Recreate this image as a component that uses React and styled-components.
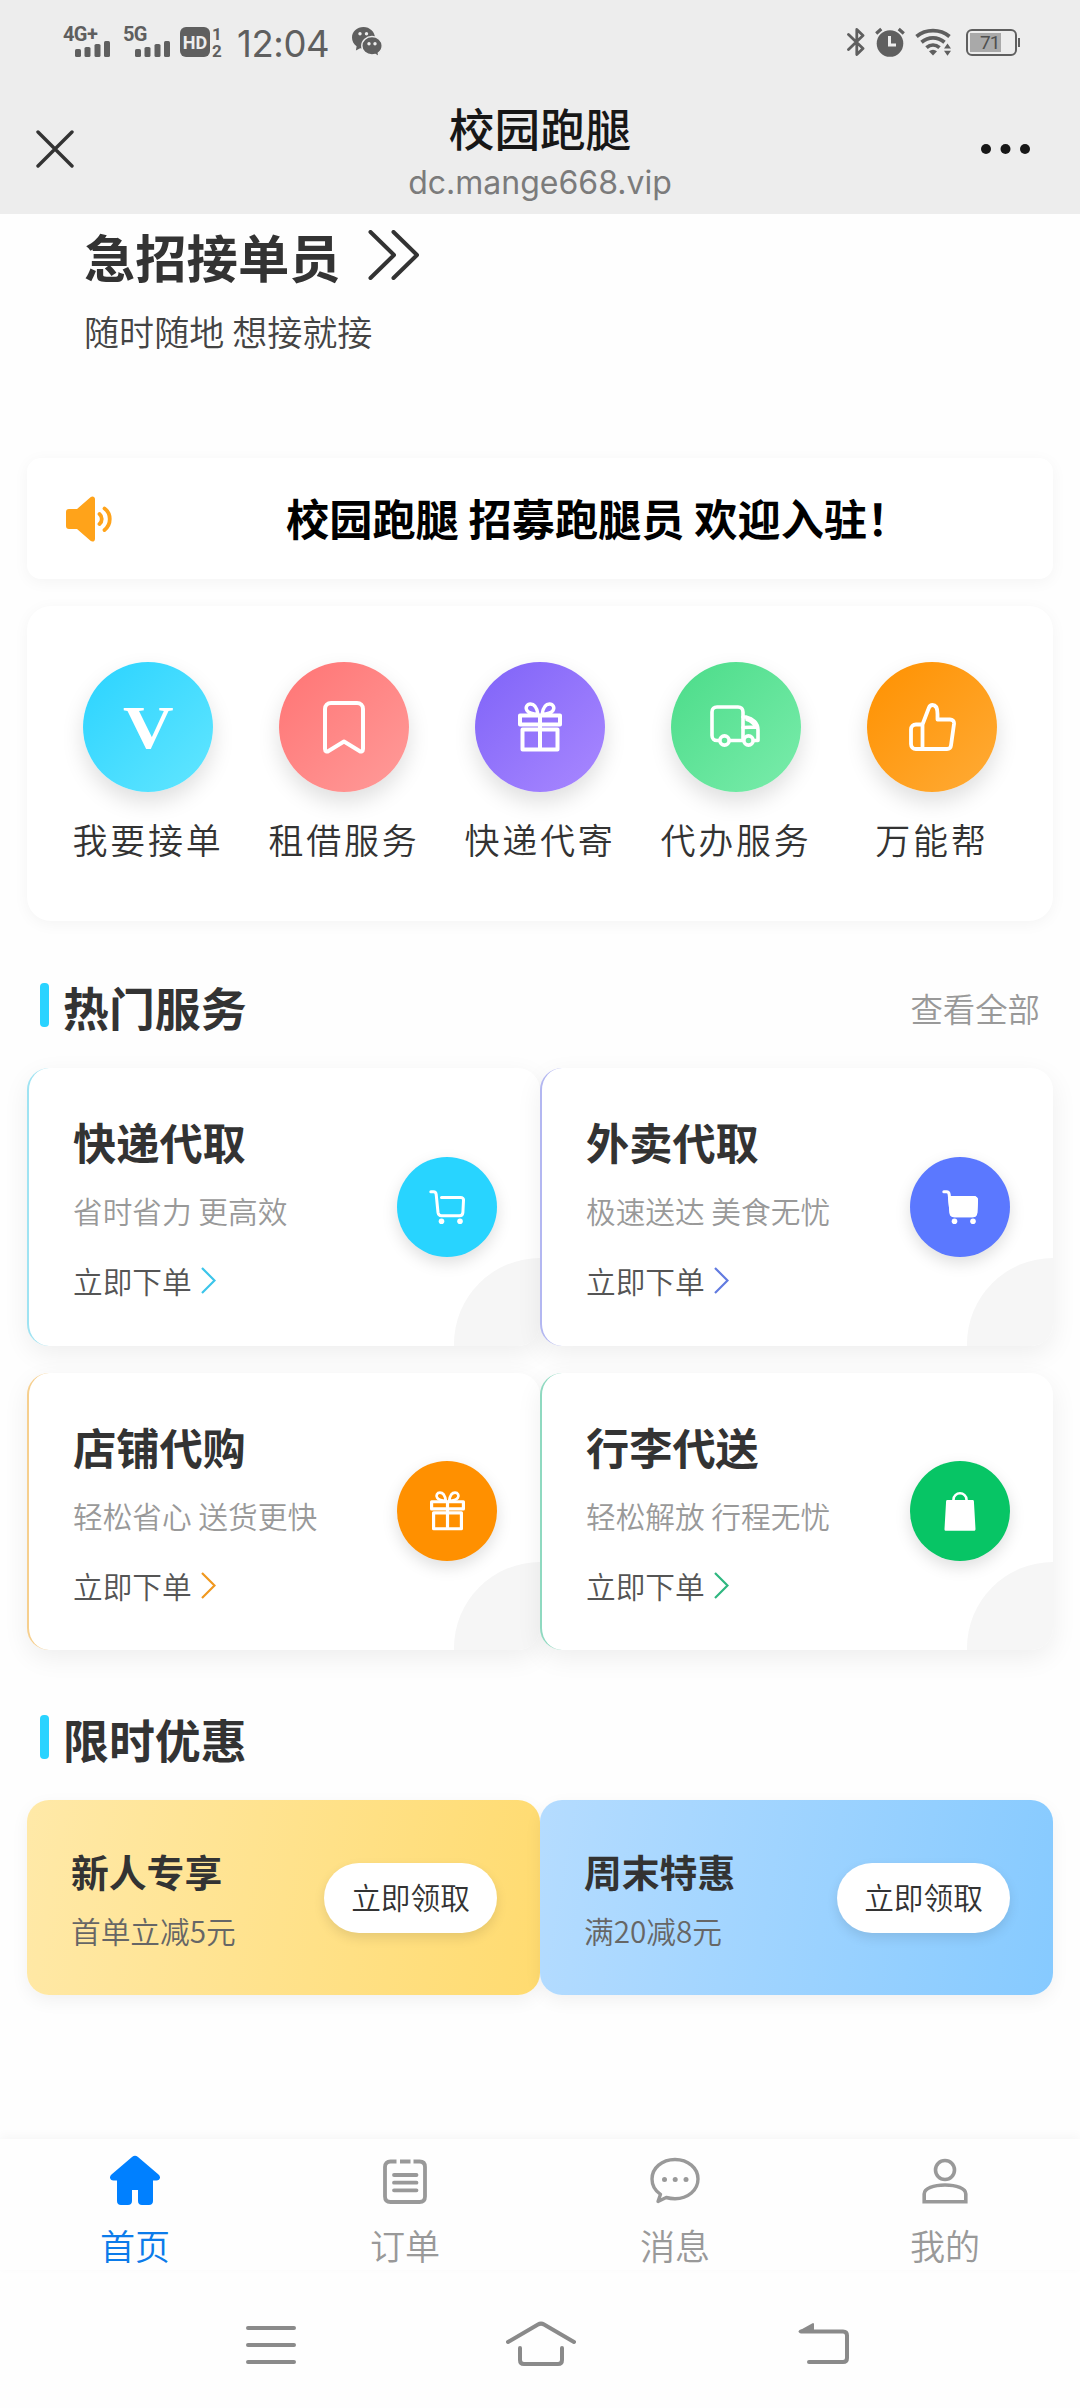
import React from "react";
import styled, { createGlobalStyle } from "styled-components";

const GlobalStyle = createGlobalStyle`
  * { box-sizing: border-box; }
  body {
    margin: 0;
    background: #fefefe;
    font-family: "Noto Sans CJK SC", "Noto Sans", sans-serif;
    color: #333;
  }
  svg { display: block; flex: none; }
`;

const Page = styled.div`
  width: 1080px;
  height: 2408px;
  display: flex;
  flex-direction: column;
  overflow: hidden;
  background: #fefefe;
`;

/* ---------- status bar and web view title ---------- */

const TopArea = styled.header`
  height: 214px;
  flex: none;
  background: #ededed;
`;

const StatusBar = styled.div`
  height: 84px;
  padding: 0 60px 0 63px;
  display: flex;
  justify-content: space-between;
  align-items: center;
  color: #5f5f5f;
`;

const StatusGroup = styled.div`
  display: flex;
  align-items: center;
  gap: ${(p) => p.$gap || 0}px;
`;

const Signal = styled.div`
  width: 47px;
  height: 30px;
  margin-right: ${(p) => p.$after}px;
  display: flex;
  flex-direction: column;
  align-items: flex-end;
`;

const SignalLabel = styled.span`
  align-self: flex-start;
  height: 14px;
  font: 700 20px/15px Roboto, sans-serif;
  letter-spacing: -0.6px;
`;

const Badge = styled.div`
  width: 30px;
  height: 30px;
  border-radius: 6px;
  background: #5f5f5f;
  color: #ededed;
  display: flex;
  justify-content: center;
  font: 700 18px/31px Roboto, sans-serif;
`;

const SimNumbers = styled.div`
  width: 12px;
  margin-left: 1px;
  height: 31px;
  display: flex;
  flex-direction: column;
  justify-content: space-between;
  align-items: center;
  font: 700 17px/14px Roboto, sans-serif;
`;

const Clock = styled.span`
  margin: 4px 20px 0 14px;
  width: 95px;
  font: 400 36.5px/44px Inter, Roboto, sans-serif;
  letter-spacing: -0.4px;
  white-space: nowrap;
`;

const BatteryBox = styled.div`
  display: flex;
  align-items: center;
  gap: 1px;
  margin-left: 4px;
`;

const Battery = styled.div`
  width: 51px;
  height: 27px;
  padding: 2px;
  border: 2px solid #5f5f5f;
  border-radius: 6px;
`;

const BatteryLevel = styled.div`
  width: 31px;
  height: 19px;
  padding-left: 10px;
  background: #a9a9a9;
  color: #4f4f4f;
  font: 400 19px/20px Roboto, sans-serif;
  letter-spacing: -1px;
`;

const BatteryTip = styled.div`
  width: 2px;
  height: 9px;
  background: #5f5f5f;
`;

const TitleBar = styled.div`
  height: 130px;
  padding: 0 50px 0 36px;
  display: grid;
  grid-template-columns: 200px 1fr 186px;
  align-items: center;
  justify-items: start;
`;

const TitleBlock = styled.div`
  justify-self: center;
  display: flex;
  flex-direction: column;
  align-items: center;
  gap: 8px;
  padding-top: 3px;
`;

const PageTitle = styled.h1`
  margin: 0;
  font-size: 45.6px;
  line-height: 56px;
  font-weight: 500;
  color: #171717;
`;

const PageHost = styled.div`
  font: 400 32px/40px Inter, Roboto, sans-serif;
  color: #7b7b7b;
`;

const MoreButton = styled.div`
  justify-self: end;
`;

/* ---------- content ---------- */

const Main = styled.main`
  flex: 1;
  padding: 0 27px;
`;

const Hero = styled.section`
  height: 244px;
  padding: 6.5px 0 0 57px;
`;

const HeroTitle = styled.h2`
  margin: 0;
  display: flex;
  align-items: center;
  gap: 27px;
  font-size: 51.3px;
  line-height: 70px;
  font-weight: 700;

  svg { margin-bottom: 2px; }
`;

const HeroText = styled.p`
  margin: 15.5px 0 0;
  font-size: 35.1px;
  line-height: 50px;
  font-weight: 350;
  color: #444;
`;

const Panel = styled.section`
  background: #fff;
  border-radius: ${(p) => p.$radius}px;
  box-shadow: 0 3px 16px rgba(0, 0, 0, 0.045);
`;

const Notice = styled(Panel)`
  height: 121px;
  padding: 0 39px;
  display: flex;
  align-items: center;
`;

const NoticeText = styled.span`
  padding: 0 0 4px 174px;
  font-size: 43.2px;
  line-height: 60px;
  font-weight: 700;
  color: #000;
  white-space: nowrap;
`;

const Menu = styled(Panel)`
  height: 315px;
  margin-top: 27px;
  padding: 56px 23px 0;
  display: grid;
  grid-template-columns: repeat(5, 1fr);
`;

const MenuItem = styled.div`
  display: flex;
  flex-direction: column;
  align-items: center;
`;

const MenuIcon = styled.div`
  width: 130px;
  height: 130px;
  border-radius: 50%;
  display: flex;
  align-items: center;
  justify-content: center;
  background: linear-gradient(135deg, ${(p) => p.$from}, ${(p) => p.$to});
  box-shadow: 0 10px 22px rgba(0, 0, 0, 0.13);
  color: #fff;
`;

const Letter = styled.span`
  padding-bottom: 1px;
  font: 700 62px/62px "Liberation Serif", serif;
  transform: scaleX(1.13);
`;

const MenuLabel = styled.span`
  margin-top: 22px;
  font-size: 35px;
  line-height: 50px;
  font-weight: 350;
  letter-spacing: 2.8px;
  white-space: nowrap;
`;

const SectionHead = styled.div`
  height: 76px;
  margin: ${(p) => p.$top}px 13px ${(p) => p.$bottom}px;
  display: flex;
  align-items: center;
`;

const Marker = styled.i`
  width: 9px;
  height: 44px;
  margin-bottom: 2px;
  border-radius: 4px;
  background: #2ad3ff;
`;

const SectionTitle = styled.h3`
  margin: 0 auto 0 14px;
  font-size: 45.9px;
  line-height: 64px;
  font-weight: 700;
`;

const SectionMore = styled.span`
  padding-top: 3px;
  font-size: 32.4px;
  line-height: 46px;
  font-weight: 350;
  color: #999;
`;

const Services = styled.div`
  display: grid;
  grid-template-columns: 1fr 1fr;
  row-gap: 27px;
`;

const ServiceCard = styled.article`
  position: relative;
  height: 277.5px;
  padding: 0 43px 0 44px;
  display: flex;
  align-items: center;
  justify-content: space-between;
  background: #fff;
  border-left: 2px solid ${(p) => p.$edge};
  border-radius: 22px;
  box-shadow: 0 8px 27px rgba(0, 0, 0, 0.065);

  &::after {
    content: "";
    position: absolute;
    right: 0;
    bottom: 0;
    width: 86px;
    height: 88px;
    border-radius: 86px 0 22px 0;
    background: #f6f6f6;
  }
`;

const ServiceTitle = styled.h4`
  margin: 0;
  font-size: 43.2px;
  line-height: 60px;
  font-weight: 700;
`;

const ServiceText = styled.p`
  margin: 19px 0 28px;
  font-size: 29.7px;
  line-height: 42px;
  font-weight: 350;
  color: #999;
`;

const ServiceAction = styled.div`
  display: flex;
  align-items: center;
  gap: 8px;
  font-size: 29.7px;
  line-height: 42px;
  font-weight: 350;
  color: #555;
`;

const ServiceIcon = styled.div`
  width: 100px;
  height: 100px;
  border-radius: 50%;
  display: flex;
  align-items: center;
  justify-content: center;
  background: ${(p) => p.$color};
  box-shadow: 0 6px 16px rgba(0, 0, 0, 0.13);
  color: #fff;
`;

const Coupons = styled.div`
  display: grid;
  grid-template-columns: 1fr 1fr;
`;

const Coupon = styled.article`
  height: 195px;
  padding: 0 43px 0 44px;
  display: flex;
  align-items: center;
  justify-content: space-between;
  border-radius: 22px;
  background: linear-gradient(100deg, ${(p) => p.$from}, ${(p) => p.$to});
  box-shadow: 0 6px 18px rgba(0, 0, 0, 0.055);
`;

const CouponTitle = styled.h4`
  margin: 0 0 12px;
  font-size: 37.8px;
  line-height: 54px;
  font-weight: 700;
`;

const CouponText = styled.p`
  margin: 0;
  font-size: 29.7px;
  line-height: 42px;
  font-weight: 350;
  color: #666;
`;

const CouponButton = styled.button`
  width: 173px;
  height: 70px;
  padding: 0 0 2px;
  border: 0;
  border-radius: 35px;
  background: #fff;
  box-shadow: 0 5px 12px rgba(0, 0, 0, 0.1);
  font: 350 29.7px/42px "Noto Sans CJK SC", sans-serif;
  color: #333;
  white-space: nowrap;
`;

/* ---------- bottom bars ---------- */

const TabBar = styled.nav`
  height: 131px;
  flex: none;
  padding-top: 16px;
  display: grid;
  grid-template-columns: repeat(4, 1fr);
  background: #fefefe;
  box-shadow: 0 -3px 10px rgba(0, 0, 0, 0.035);
`;

const Tab = styled.div`
  display: flex;
  flex-direction: column;
  align-items: center;
  gap: 15px;
  color: ${(p) => (p.$active ? "#0080ff" : "#999")};
`;

const TabLabel = styled.span`
  font-size: 35.1px;
  line-height: 50px;
  font-weight: 350;
  color: ${(p) => (p.$active ? "#0b7bea" : "#999")};
`;

const SystemBar = styled.div`
  height: 138px;
  flex: none;
  padding: 50px 230px 0 246px;
  display: flex;
  justify-content: space-between;
  align-items: flex-start;
  color: #8a8a8a;
`;

const HomeKey = styled.div`
  margin-right: 13px;
`;

/* ---------- icons ---------- */

const Stroke = ({ w, h, width = 4, children }) => (
  <svg width={w} height={h} viewBox={`0 0 ${w} ${h}`} fill="none" stroke="currentColor"
    strokeWidth={width} strokeLinecap="round" strokeLinejoin="round">
    {children}
  </svg>
);

const Bars = () => (
  <svg width="35" height="16" viewBox="0 0 35 16" fill="currentColor">
    <rect x="0" y="8" width="6" height="8" rx="1.6" />
    <rect x="9.5" y="6" width="6" height="10" rx="1.6" />
    <rect x="19.5" y="3" width="6" height="13" rx="1.6" />
    <rect x="29" y="0" width="6" height="16" rx="1.6" />
  </svg>
);

const WeChat = () => (
  <svg width="31" height="30" viewBox="0 0 31 30" fill="currentColor">
    <path d="M11.5 0C5.2 0 0 4.500 0 10.500c0 3.700 1.700 6.500 4.600 8.700L3.900 23.500l4.200-2.300c1.100.3 2.200.4 3.400.4C17.800 21.600 23 16.600 23 10.800S17.800 0 11.500 0z" />
    <circle cx="8" cy="6.800" r="1.700" fill="#ededed" />
    <circle cx="14.500" cy="6.800" r="1.700" fill="#ededed" />
    <path d="M20 9.500c-5.600 0-10.200 4-10.200 9.300S14.400 28 20 28c1.200 0 2.300-.2 3.400-.5L27 29.800l-.7-3.700c2.300-1.700 3.900-4.200 3.900-7.300 0-5.300-4.600-9.300-10.200-9.300z" stroke="#ededed" strokeWidth="1.400" />
    <circle cx="17" cy="16.700" r="1.700" fill="#ededed" />
    <circle cx="23" cy="16.700" r="1.700" fill="#ededed" />
  </svg>
);

const Bluetooth = () => (
  <Stroke w={18} h={30} width={2.8}>
    <path d="M1.500 7.500 16 21.500 9.800 27.500V2.500L16 8.500 1.500 22.500" />
  </Stroke>
);

const Alarm = () => (
  <svg width="30" height="30" viewBox="0 0 30 30">
    <circle cx="15" cy="16.500" r="13.300" fill="currentColor" />
    <path d="M1.200 6.500 6.300 2M28.800 6.500 23.700 2" stroke="currentColor" strokeWidth="3.200" />
    <path d="M14.500 9v9h6.500" stroke="#ededed" strokeWidth="3" fill="none" />
  </svg>
);

const Wifi = () => (
  <svg width="37" height="28" viewBox="0 0 37 28" fill="none" stroke="currentColor" strokeWidth="3.800">
    <path d="M1.500 8.500C11 .6 25 .6 34.500 8.500M6.500 14.200c7-5.800 16-5.800 23 0M11.500 19.600c4-3.400 9-3.400 13 0" />
    <path d="M14 23.300c2.500-2 5.500-2 8 0L18 27.500z" fill="currentColor" stroke="none" />
    <path d="M29 20.500 32.500 15.500 36 20.500zM29 22.700 32.500 27.700 36 22.700z" fill="currentColor" stroke="none" />
  </svg>
);

const Speaker = () => (
  <svg width="46" height="46" viewBox="0 0 46 46" fill="#ffa31a">
    <path d="M3 13h8L24.500 1.200C26.300-.3 29 .5 29 3v40c0 2.500-2.700 3.300-4.500 1.800L11 33H3c-2 0-3-1-3-3V16c0-2 1-3 3-3z" />
    <path d="M33.500 18c3 2.500 3 7.500 0 10M38.500 12.500c7 5 7 16 0 21.500" fill="none" stroke="#ffa31a" strokeWidth="3.800" strokeLinecap="round" />
  </svg>
);

const Bookmark = () => (
  <Stroke w={42} h={53} width={4}>
    <path d="M8 2h26c3.500 0 6 2.500 6 6v40c0 2.500-2 3-3.500 2L21 40.500 5.500 50C4 51 2 50.500 2 48V8c0-3.500 2.500-6 6-6z" />
  </Stroke>
);

const Gift = ({ size = 44 }) => (
  <svg width={size} height={(size * 50) / 44} viewBox="0 0 44 50" fill="none" stroke="currentColor"
    strokeWidth="4" strokeLinejoin="round">
    <path d="M2 13.500h40v9H2zM4.500 27.500h35v20h-35zM22 13.500v34" />
    <path d="M20 12.500C19 6 16 2 12.500 2S7 5.500 9 8.500s5 3.500 11 4zM24 12.500C25 6 28 2 31.500 2S37 5.500 35 8.500s-5 3.500-11 4z" strokeWidth="3.400" />
  </svg>
);

const Truck = () => (
  <Stroke w={52} h={44} width={3.6}>
    <path d="M9.500 35.500H7c-3 0-5-2-5-5V7c0-3 2-5 5-5h21c3 0 5 2 5 5v28.500H19.500" />
    <path d="M33 12h3c7 1.500 12 6 12 13v10.500h-4.500M33 22.500l14.500-.5M37 14.500c3.500 1 6.500 3.500 9 7" />
    <circle cx="14.500" cy="35.500" r="4.600" />
    <circle cx="38.500" cy="35.500" r="4.600" />
  </Stroke>
);

const Thumb = () => (
  <Stroke w={47} h={48} width={3.8}>
    <path d="M13.500 21.500H7c-3 0-5 2-5 5V41c0 3 2 5 5 5h31c2 0 3.700-1.200 4-3.500l3-21.500c.3-3-1.500-4.500-4-4.500H28.500V11C28.500 4.500 26.500 2 23.500 2c-2 0-3 1.200-3.700 3L13.500 21.500V46" />
  </Stroke>
);

const Cart = ({ filled }) => (
  <Stroke w={36} h={34} width={3}>
    <path d="M1.800 1.800H4.500C6.500 1.800 7 3 7.200 4.500L9 22.500c.3 2 1.500 3.200 3.500 3.200h18c2 0 3.200-1.200 3.400-3.200L34.500 10.500C34.700 8.500 33.500 7.500 31.500 7.500H12.500" />
    {filled && <path d="M7.500 7.500H31.500c2 0 3 1 3 3l-.7 12c-.2 2-1.400 3.200-3.400 3.200h-18C10 25.700 9 24 9 22.500z" fill="currentColor" />}
    <circle cx="12.500" cy="31.200" r="2.800" fill="currentColor" stroke="none" />
    <circle cx="31" cy="31.200" r="2.800" fill="currentColor" stroke="none" />
  </Stroke>
);

const Bag = () => (
  <svg width="32" height="39" viewBox="0 0 32 39">
    <path d="M3.500 8h25c.8 0 1.300.5 1.400 1.300L31.500 37c0 1-.5 1.800-1.500 1.800H2c-1 0-1.600-.8-1.500-1.800L2.100 9.300C2.200 8.500 2.700 8 3.500 8z" fill="currentColor" />
    <path d="M9.500 9V7.500C9.500 4 12.500 1.300 16 1.300S22.500 4 22.500 7.500V9" fill="none" stroke="currentColor" strokeWidth="2.600" />
  </svg>
);

const Arrow = ({ color }) => (
  <svg width="16" height="28" viewBox="0 0 16 28" fill="none" stroke={color} strokeWidth="2.200">
    <path d="M2 1 14.500 13.500 2 26" />
  </svg>
);

const Home = () => (
  <svg width="50" height="50" viewBox="0 0 50 50" fill="currentColor">
    <path d="M22 2c2-1.700 4-1.700 6 0L48.500 19.500c2.800 2.500 1.500 6-2 6H43V46c0 2.500-1.500 4-4 4h-7c-2.500 0-4-1.500-4-4V35h-6v11c0 2.500-1.500 4-4 4h-7c-2.500 0-4-1.500-4-4V25.500H3.500c-3.500 0-4.800-3.500-2-6z" />
  </svg>
);

const Order = () => (
  <svg width="44" height="50" viewBox="0 0 44 50" fill="none" stroke="currentColor" strokeWidth="3.800">
    <path d="M13.500 6.500H7.500C4 6.500 2 8.500 2 12v29.500C2 45 4 47 7.500 47h29c3.500 0 5.500-2 5.500-5.500V12c0-3.500-2-5.500-5.500-5.500H30.500M17 6.500h10.500" />
    <path d="M11 20h22.500M11 27.700h22.500M11 35.300h22.500" strokeLinecap="round" />
  </svg>
);

const Message = () => (
  <svg width="50" height="50" viewBox="0 0 50 50" fill="none" stroke="currentColor" strokeWidth="3.400" strokeLinejoin="round">
    <path d="M25 4.500C12 4.500 2 13 2 24c0 6.500 3.200 11.800 8.500 15.300L8 46.500l8.200-4c2.800.8 5.800 1.200 8.800 1.200 13 0 23-8.700 23-19.700S38 4.500 25 4.500z" />
    <g fill="currentColor" stroke="none">
      <circle cx="14.500" cy="24.500" r="2.500" />
      <circle cx="25.200" cy="24.500" r="2.500" />
      <circle cx="36" cy="24.500" r="2.500" />
    </g>
  </svg>
);

const Person = () => (
  <svg width="46" height="50" viewBox="0 0 46 50" fill="none" stroke="currentColor" strokeWidth="3.600">
    <circle cx="23" cy="15" r="9.500" />
    <path d="M2.200 46.700V39C2.200 33.500 11.500 30 23 30s20.800 3.500 20.800 9v7.700z" />
  </svg>
);

/* ---------- data ---------- */

const menu = [
  { label: "我要接单", from: "#2ad3ff", to: "#62e6ff", icon: <Letter>V</Letter> },
  { label: "租借服务", from: "#ff7474", to: "#ff9b99", icon: <Bookmark /> },
  { label: "快递代寄", from: "#7f63f8", to: "#a988ff", icon: <Gift /> },
  { label: "代办服务", from: "#4bdc89", to: "#7aecab", icon: <Truck /> },
  { label: "万能帮", from: "#ff9100", to: "#ffab36", icon: <Thumb /> },
];

const services = [
  { title: "快递代取", text: "省时省力 更高效", color: "#28d4ff", edge: "#9fe3f2", arrow: "#3cc5ea", icon: <Cart /> },
  { title: "外卖代取", text: "极速送达 美食无忧", color: "#5b78ff", edge: "#b3b7f1", arrow: "#627be0", icon: <Cart filled /> },
  { title: "店铺代购", text: "轻松省心 送货更快", color: "#ff9000", edge: "#f6cf8e", arrow: "#f0981f", icon: <Gift size={35} /> },
  { title: "行李代送", text: "轻松解放 行程无忧", color: "#07c565", edge: "#8fd9c0", arrow: "#2fb780", icon: <Bag /> },
];

const coupons = [
  { title: "新人专享", text: "首单立减5元", from: "#ffe9a8", to: "#ffdb70" },
  { title: "周末特惠", text: "满20减8元", from: "#b5dcff", to: "#86caff" },
];

const tabs = [
  { label: "首页", icon: <Home />, active: true },
  { label: "订单", icon: <Order /> },
  { label: "消息", icon: <Message /> },
  { label: "我的", icon: <Person /> },
];

export default function App() {
  return (
    <Page>
      <GlobalStyle />
      <TopArea>
        <StatusBar>
          <StatusGroup>
            <Signal $after={13}>
              <SignalLabel>4G+</SignalLabel>
              <Bars />
            </Signal>
            <Signal $after={10}>
              <SignalLabel>5G</SignalLabel>
              <Bars />
            </Signal>
            <Badge>HD</Badge>
            <SimNumbers>
              <span>1</span>
              <span>2</span>
            </SimNumbers>
            <Clock>12:04</Clock>
            <WeChat />
          </StatusGroup>
          <StatusGroup $gap={10}>
            <Bluetooth />
            <Alarm />
            <Wifi />
            <BatteryBox>
              <Battery>
                <BatteryLevel>71</BatteryLevel>
              </Battery>
              <BatteryTip />
            </BatteryBox>
          </StatusGroup>
        </StatusBar>
        <TitleBar>
          <Stroke w={38} h={38} width={3.4}>
            <path d="M2 2 36 36M36 2 2 36" />
          </Stroke>
          <TitleBlock>
            <PageTitle>校园跑腿</PageTitle>
            <PageHost>dc.mange668.vip</PageHost>
          </TitleBlock>
          <MoreButton>
            <svg width="49" height="10" viewBox="0 0 49 10" fill="#171717">
              <circle cx="5" cy="5" r="5" />
              <circle cx="24.500" cy="5" r="5" />
              <circle cx="44" cy="5" r="5" />
            </svg>
          </MoreButton>
        </TitleBar>
      </TopArea>

      <Main>
        <Hero>
          <HeroTitle>
            急招接单员
            <Stroke w={52} h={50} width={4}>
              <path d="M2.500 2 26 25 2.500 48M25.500 2 49 25 25.500 48" />
            </Stroke>
          </HeroTitle>
          <HeroText>随时随地 想接就接</HeroText>
        </Hero>

        <Notice $radius={14}>
          <Speaker />
          <NoticeText>校园跑腿 招募跑腿员 欢迎入驻！</NoticeText>
        </Notice>

        <Menu $radius={24}>
          {menu.map((m) => (
            <MenuItem key={m.label}>
              <MenuIcon $from={m.from} $to={m.to}>{m.icon}</MenuIcon>
              <MenuLabel>{m.label}</MenuLabel>
            </MenuItem>
          ))}
        </Menu>

        <SectionHead $top={47} $bottom={24}>
          <Marker />
          <SectionTitle>热门服务</SectionTitle>
          <SectionMore>查看全部</SectionMore>
        </SectionHead>
        <Services>
          {services.map((s) => (
            <ServiceCard key={s.title} $edge={s.edge}>
              <div>
                <ServiceTitle>{s.title}</ServiceTitle>
                <ServiceText>{s.text}</ServiceText>
                <ServiceAction>
                  立即下单
                  <Arrow color={s.arrow} />
                </ServiceAction>
              </div>
              <ServiceIcon $color={s.color}>{s.icon}</ServiceIcon>
            </ServiceCard>
          ))}
        </Services>

        <SectionHead $top={49.5} $bottom={24.5}>
          <Marker />
          <SectionTitle>限时优惠</SectionTitle>
        </SectionHead>
        <Coupons>
          {coupons.map((c) => (
            <Coupon key={c.title} $from={c.from} $to={c.to}>
              <div>
                <CouponTitle>{c.title}</CouponTitle>
                <CouponText>{c.text}</CouponText>
              </div>
              <CouponButton>立即领取</CouponButton>
            </Coupon>
          ))}
        </Coupons>
      </Main>

      <TabBar>
        {tabs.map((t) => (
          <Tab key={t.label} $active={t.active}>
            {t.icon}
            <TabLabel $active={t.active}>{t.label}</TabLabel>
          </Tab>
        ))}
      </TabBar>
      <SystemBar>
        <Stroke w={50} h={50}>
          <path d="M2 8h46M2 25h46M2 42h46" />
        </Stroke>
        <HomeKey>
          <Stroke w={70} h={50}>
            <path d="M2 22 32 4.500c2-1.200 4-1.200 6 0L68 22M14 28v12c0 2.500 1.500 4 4 4h34c2.500 0 4-1.500 4-4V28" />
          </Stroke>
        </HomeKey>
        <Stroke w={52} h={50}>
          <path d="M3 11.500h42c2.500 0 4 1.500 4 4V38c0 2.500-1.500 4-4 4H11" />
          <path d="M1.500 11.500 15 4v7.500z" fill="currentColor" strokeWidth="2" />
        </Stroke>
      </SystemBar>
    </Page>
  );
}
